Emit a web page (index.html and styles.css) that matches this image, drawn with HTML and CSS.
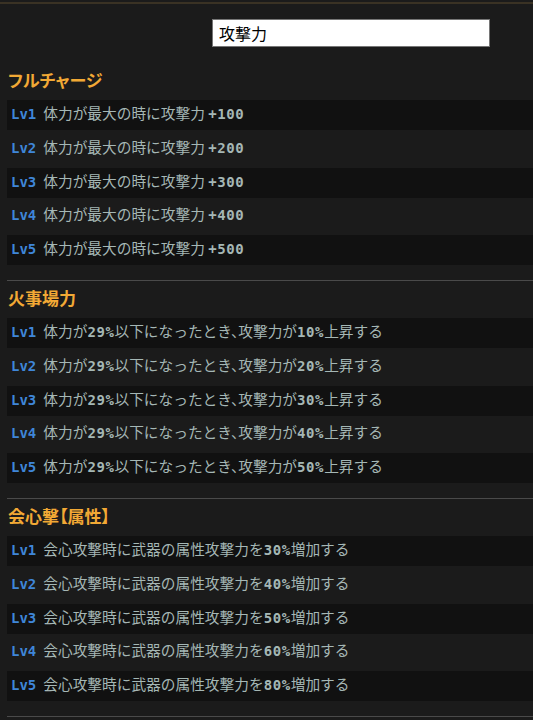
FILE: index.html
```html
<!DOCTYPE html>
<html lang="ja">
<head>
    <meta charset="UTF-8">
    <meta name="viewport" content="width=device-width, initial-scale=1.0">
    <title>スキル検索</title>
    <link rel="stylesheet" href="styles.css">
</head>
<body>
    <div class="topline"></div>
    <div class="search">
        <input type="text" id="query" value="攻撃力">
    </div>

    <div class="skill">
        <h2>フルチャージ</h2>
        <div class="row"><span class="lv">Lv1</span>体力が最大の時に攻撃力 <b>+100</b></div>
        <div class="row"><span class="lv">Lv2</span>体力が最大の時に攻撃力 <b>+200</b></div>
        <div class="row"><span class="lv">Lv3</span>体力が最大の時に攻撃力 <b>+300</b></div>
        <div class="row"><span class="lv">Lv4</span>体力が最大の時に攻撃力 <b>+400</b></div>
        <div class="row"><span class="lv">Lv5</span>体力が最大の時に攻撃力 <b>+500</b></div>
    </div>

    <div class="skill">
        <h2>火事場力</h2>
        <div class="row tight"><span class="lv">Lv1</span>体力が<b>29%</b>以下になったとき、攻撃力が<b>10%</b>上昇する</div>
        <div class="row tight"><span class="lv">Lv2</span>体力が<b>29%</b>以下になったとき、攻撃力が<b>20%</b>上昇する</div>
        <div class="row tight"><span class="lv">Lv3</span>体力が<b>29%</b>以下になったとき、攻撃力が<b>30%</b>上昇する</div>
        <div class="row tight"><span class="lv">Lv4</span>体力が<b>29%</b>以下になったとき、攻撃力が<b>40%</b>上昇する</div>
        <div class="row tight"><span class="lv">Lv5</span>体力が<b>29%</b>以下になったとき、攻撃力が<b>50%</b>上昇する</div>
    </div>

    <div class="skill">
        <h2>会心撃【属性】</h2>
        <div class="row"><span class="lv">Lv1</span>会心攻撃時に武器の属性攻撃力を<b>30%</b>増加する</div>
        <div class="row"><span class="lv">Lv2</span>会心攻撃時に武器の属性攻撃力を<b>40%</b>増加する</div>
        <div class="row"><span class="lv">Lv3</span>会心攻撃時に武器の属性攻撃力を<b>50%</b>増加する</div>
        <div class="row"><span class="lv">Lv4</span>会心攻撃時に武器の属性攻撃力を<b>60%</b>増加する</div>
        <div class="row"><span class="lv">Lv5</span>会心攻撃時に武器の属性攻撃力を<b>80%</b>増加する</div>
    </div>
</body>
</html>
```

FILE: styles.css
```css
body {
    margin: 0;
    padding: 0 0 0 7px;
    background-color: #1b1b1b;
    color: #a5b7b5;
    font-family: "Noto Sans CJK JP", "Noto Sans", sans-serif;
    overflow: hidden;
}
.topline {
    height: 2px;
    margin: 2px 0 0 -7px;
    background-color: #3a3224;
}
.search {
    padding: 15px 0 0 205px;
    height: 28px;
}
.search input {
    box-sizing: border-box;
    width: 278px;
    height: 28px;
    margin: 0;
    padding: 0 6px;
    border: 1px solid #767676;
    background-color: white;
    color: black;
    font-family: "Noto Sans CJK JP", sans-serif;
    font-size: 16px;
    outline: none;
}
.skill {
    margin-top: 16px;
    padding-bottom: 11.25px;
    border-bottom: 1px solid #4a4a4a;
}
.skill + .skill {
    margin-top: 0;
}
.skill h2 {
    margin: 0;
    padding: 8px 0 11px 1px;
    font-size: 17px;
    line-height: 18px;
    font-weight: bold;
    color: #f2a935;
    font-feature-settings: "palt";
}
.row {
    box-sizing: border-box;
    height: 30px;
    margin-bottom: 3.75px;
    padding: 1px 0 0 4px;
    line-height: 24px;
    font-size: 14.7px;
    white-space: pre;
}
.row.tight {
    font-feature-settings: "halt";
}
.row:nth-of-type(odd) {
    background-color: #111111;
}
.lv {
    font-family: "DejaVu Sans Mono", monospace;
    font-weight: bold;
    font-size: 14px;
    color: #3f86d8;
    margin-right: 7px;
}
.row b {
    font-family: "DejaVu Sans Mono", monospace;
    font-size: 14px;
    letter-spacing: 0.6px;
    font-weight: bold;
}
```
